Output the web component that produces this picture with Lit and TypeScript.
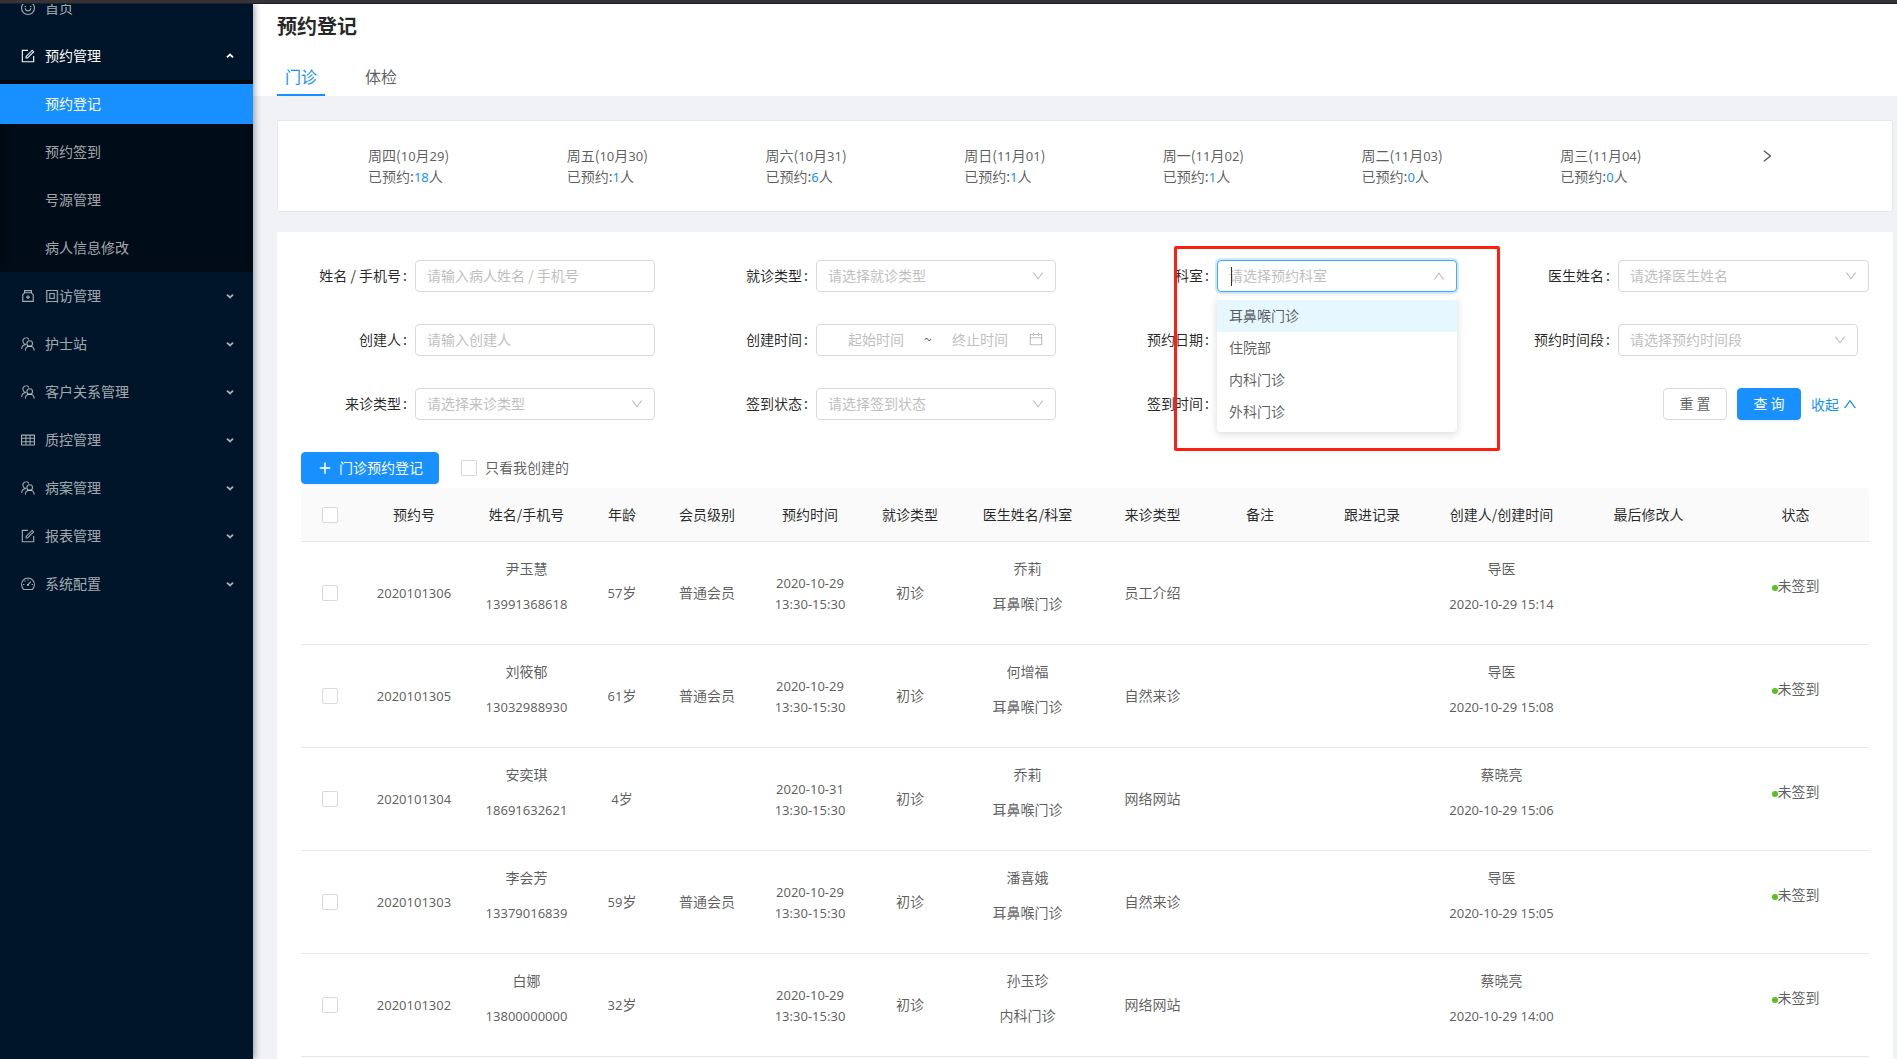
import { LitElement, html, css, svg } from "lit";
import { customElement, state } from "lit/decorators.js";

const icons: Record<string, unknown> = {
  smile: svg`<g fill="none" stroke="currentColor" stroke-width="70"><circle cx="512" cy="512" r="413"/><path d="M336 545c12 95 88 152 176 152s164-57 176-152" stroke-linecap="round"/></g><circle cx="336" cy="416" r="50"/><circle cx="688" cy="416" r="50"/>`,
  form: svg`<path d="M904 512h-56c-4.4 0-8 3.6-8 8v320H184V184h320c4.4 0 8-3.6 8-8v-56c0-4.4-3.6-8-8-8H144c-17.7 0-32 14.3-32 32v736c0 17.7 14.3 32 32 32h736c17.7 0 32-14.3 32-32V520c0-4.4-3.6-8-8-8z"/><path d="M355.9 534.9L354 653.8c-.1 8.9 7.1 16.2 16 16.2h.4l118-2.9c2-.1 4-.9 5.4-2.3l415.9-415c3.1-3.1 3.1-8.2 0-11.3L785.4 114.3c-1.6-1.6-3.6-2.3-5.7-2.3s-4.1.8-5.7 2.3l-415.8 415a8.3 8.3 0 0 0-2.3 5.6zm63.5 23.6L779.7 199l45.2 45.1-360.5 359.7-45.7 1.1.7-46.4z"/>`,
  medicine: svg`<g fill="none" stroke="currentColor" stroke-width="72"><path d="M310 300L176 430v426h672V430L714 300z"/><path d="M290 300V164h444v136"/></g><path d="M476 460h72v88h88v72h-88v88h-72v-88h-88v-72h88z"/>`,
  team: svg`<g fill="none" stroke="currentColor" stroke-width="68" stroke-linecap="round"><circle cx="620" cy="480" r="180"/><path d="M340 910c20-140 120-250 280-250s270 110 290 250"/><path d="M560 200c-40-60-110-92-180-84-150 10-230 160-180 290 30 80 100 120 180 126M110 800c10-130 100-240 250-262"/></g>`,
  table: svg`<path d="M928 160H96c-17.7 0-32 14.3-32 32v640c0 17.7 14.3 32 32 32h832c17.7 0 32-14.3 32-32V192c0-17.7-14.3-32-32-32zm-40 208H676V232h212v136zm0 224H676V432h212v160zM412 432h200v160H412V432zm200-64H412V232h200v136zm-476 64h212v160H136V432zm0-200h212v136H136V232zm0 424h212v136H136V656zm276 0h200v136H412V656zm476 136H676V656h212v136z"/>`,
  dashboard: svg`<g fill="none" stroke="currentColor" stroke-width="68"><path d="M250 868a414 414 0 1 1 524 0z"/><path d="M512 200v90M290 290l60 60M190 540h90M744 540h90M500 580l190-220"/></g><circle cx="500" cy="580" r="66"/>`,
  down: svg`<path d="M884 256h-75c-5.1 0-9.9 2.5-12.9 6.6L512 654.2 227.9 262.6c-3-4.1-7.8-6.6-12.9-6.6h-75c-6.5 0-10.3 7.4-6.5 12.7l352.6 486.1c12.8 17.6 39 17.6 51.7 0l352.6-486.1c3.9-5.3.1-12.7-6.4-12.7z"/>`,
  up: svg`<path d="M890.5 755.3L537.9 269.2c-12.8-17.6-39-17.6-51.7 0L133.5 755.3A8 8 0 0 0 140 768h75c5.1 0 9.9-2.5 12.9-6.6L512 369.8l284.1 391.6c3 4.1 7.8 6.6 12.9 6.6h75c6.5 0 10.3-7.4 6.5-12.7z"/>`,
  right: svg`<path d="M765.7 486.8L314.9 134.7A7.97 7.97 0 0 0 302 141v77.3c0 4.9 2.3 9.6 6.1 12.6l360 281.1-360 281.1c-3.9 3-6.1 7.7-6.1 12.6V883c0 6.7 7.7 10.4 12.9 6.3l450.8-352.1a31.96 31.96 0 0 0 0-50.4z"/>`,
  plus: svg`<path d="M462 152h100v720H462z"/><path d="M176 462h672v100H176z"/>`,
  calendar: svg`<path d="M880 184H712v-64c0-4.4-3.6-8-8-8h-56c-4.4 0-8 3.6-8 8v64H384v-64c0-4.4-3.6-8-8-8h-56c-4.4 0-8 3.6-8 8v64H144c-17.7 0-32 14.3-32 32v664c0 17.7 14.3 32 32 32h736c17.7 0 32-14.3 32-32V216c0-17.7-14.3-32-32-32zm-40 656H184V460h656v380zM184 392V256h128v48c0 4.4 3.6 8 8 8h56c4.4 0 8-3.6 8-8v-48h256v48c0 4.4 3.6 8 8 8h56c4.4 0 8-3.6 8-8v-48h128v136H184z"/>`,
  caretDown: svg`<path d="M200 370l312 290 312-290" fill="none" stroke="currentColor" stroke-width="190"/>`,
  caretUp: svg`<path d="M200 660l312-290 312 290" fill="none" stroke="currentColor" stroke-width="190"/>`,
};

const icon = (name: string, cls = "") =>
  html`<svg class="icon ${cls}" viewBox="0 0 1024 1024" aria-hidden="true">${icons[name]}</svg>`;

/** Sets runs of digits in the numeral face, leaving Han text as it is. */
const numerals = (text: string) =>
  text
    .split(/([0-9][0-9:\- ]*)/)
    .filter(Boolean)
    .map((part) => (/^[0-9]/.test(part) ? html`<span class="num">${part}</span>` : part));

const menu = [
  { icon: "smile", label: "首页" },
  {
    icon: "form",
    label: "预约管理",
    children: ["预约登记", "预约签到", "号源管理", "病人信息修改"],
  },
  { icon: "medicine", label: "回访管理", closed: true },
  { icon: "team", label: "护士站", closed: true },
  { icon: "team", label: "客户关系管理", closed: true },
  { icon: "table", label: "质控管理", closed: true },
  { icon: "team", label: "病案管理", closed: true },
  { icon: "form", label: "报表管理", closed: true },
  { icon: "dashboard", label: "系统配置", closed: true },
];

const days = [
  ["周四(10月29)", "18"],
  ["周五(10月30)", "1"],
  ["周六(10月31)", "6"],
  ["周日(11月01)", "1"],
  ["周一(11月02)", "1"],
  ["周二(11月03)", "0"],
  ["周三(11月04)", "0"],
];

const columns: [string, number][] = [
  ["预约号", 110],
  ["姓名/手机号", 115],
  ["年龄", 76],
  ["会员级别", 94],
  ["预约时间", 112],
  ["就诊类型", 88],
  ["医生姓名/科室", 147],
  ["来诊类型", 103],
  ["备注", 112],
  ["跟进记录", 112],
  ["创建人/创建时间", 147],
  ["最后修改人", 147],
  ["状态", 147],
];

const rows = [
  { id: "2020101306", name: "尹玉慧", phone: "13991368618", age: "57岁", level: "普通会员", date: "2020-10-29", doctor: "乔莉", dept: "耳鼻喉门诊", source: "员工介绍", by: "导医", at: "2020-10-29 15:14" },
  { id: "2020101305", name: "刘筱郁", phone: "13032988930", age: "61岁", level: "普通会员", date: "2020-10-29", doctor: "何增福", dept: "耳鼻喉门诊", source: "自然来诊", by: "导医", at: "2020-10-29 15:08" },
  { id: "2020101304", name: "安奕琪", phone: "18691632621", age: "4岁", level: "", date: "2020-10-31", doctor: "乔莉", dept: "耳鼻喉门诊", source: "网络网站", by: "蔡晓亮", at: "2020-10-29 15:06" },
  { id: "2020101303", name: "李会芳", phone: "13379016839", age: "59岁", level: "普通会员", date: "2020-10-29", doctor: "潘喜娥", dept: "耳鼻喉门诊", source: "自然来诊", by: "导医", at: "2020-10-29 15:05" },
  { id: "2020101302", name: "白娜", phone: "13800000000", age: "32岁", level: "", date: "2020-10-29", doctor: "孙玉珍", dept: "内科门诊", source: "网络网站", by: "蔡晓亮", at: "2020-10-29 14:00" },
];

@customElement("app-root")
export class AppRoot extends LitElement {
  @state() private department = "耳鼻喉门诊";

  static styles = css`
    :host {
      display: flex;
      flex-direction: column;
      height: 100vh;
      overflow: hidden;
      background: #f0f2f5;
      color: rgba(0, 0, 0, 0.65);
      font: 14px/21px "Noto Sans CJK SC", sans-serif;
    }
    * { box-sizing: border-box; }
    button, input, select { font: inherit; color: inherit; margin: 0; }
    a { color: inherit; text-decoration: none; }
    h1, p, ul { margin: 0; padding: 0; }
    ul { list-style: none; }
    .icon { display: block; flex: none; width: 16px; height: 16px; fill: currentColor; }
    .num { font-family: "Noto Sans", sans-serif; font-size: 13px; line-height: 1; }
    .topbar { flex: none; height: 4px; background: #343438; border-bottom: 1px solid #202124; }
    .shell { flex: 1; min-height: 0; display: flex; overflow: hidden; }

    .side {
      flex: none; width: 253px; overflow: hidden; background: #001529;
      color: rgba(255, 255, 255, 0.65); box-shadow: 2px 0 6px rgba(0, 21, 41, 0.35); z-index: 1;
    }
    .menu { margin-top: -20px; }
    .entry {
      display: flex; align-items: center; gap: 9px; width: 100%; height: 48px;
      padding: 0 16px 0 20px; border: 0; background: none; text-align: left;
    }
    .entry.open { color: #fff; }
    .entry .icon.caret { width: 10px; height: 10px; margin: 0 2px 0 auto; }
    .sub { background: #000c17; box-shadow: inset 0 2px 8px rgba(0, 0, 0, 0.45); }
    .sub li { padding: 4px 0; }
    .sub a { display: block; padding: 0 0 2px 45px; line-height: 38px; }
    .sub a.current { background: #1890ff; color: #fff; }
    .entry span, .btn span, .check span { padding-bottom: 2px; }

    .main { flex: 1; min-width: 0; overflow: hidden; }
    .head { height: 92px; padding: 7px 24px 0; background: #fff; }
    h1 { font-size: 20px; line-height: 30px; font-weight: 700; color: rgba(0, 0, 0, 0.85); }
    .tabs { display: flex; gap: 32px; margin-top: 17px; font-size: 16px; }
    .tabs a { padding: 6px 8px 8px; line-height: 24px; }
    .tabs a.current { color: #1890ff; border-bottom: 2px solid #1890ff; padding-bottom: 6px; }
    .content { display: flex; flex-direction: column; gap: 20px; padding: 24px 4px 0 24px; }

    .days {
      display: grid; grid-template-columns: repeat(7, 1fr) 133px; padding: 24px 0 24px 90px;
      background: #fff; border: 1px solid #e8e8e8; border-radius: 2px;
    }
    .days b { font-weight: 400; color: #1890ff; }
    .next { justify-self: start; align-self: start; height: 21px; padding: 0; border: 0; background: none; }

    .panel { padding: 28px 24px 0; background: #fff; min-height: 100vh; }
    .filters { display: grid; grid-template-columns: repeat(4, 1fr); row-gap: 32px; margin: 0 -18px; }
    .field { display: flex; align-items: center; padding: 0 18px; height: 32px; }
    .label { flex: none; width: 114px; padding: 0 8px 2px 0; text-align: right; color: rgba(0, 0, 0, 0.85); white-space: nowrap; }
    .colon { margin-left: 2px; }
    .control { position: relative; flex: 1; max-width: 240px; height: 32px; }
    .control.wide { max-width: none; }
    .box {
      width: 100%; height: 32px; padding: 0 11px 2px; border: 1px solid #d9d9d9; border-radius: 4px;
      background: #fff; outline: 0; appearance: none; display: flex; align-items: center;
    }
    select.box { color: #bfbfbf; }
    ::placeholder { color: #bfbfbf; opacity: 1; }
    .control > .icon { position: absolute; right: 11px; top: 9px; width: 14px; height: 14px; color: #bfbfbf; pointer-events: none; }
    .range input { flex: 1; min-width: 0; width: 0; border: 0; outline: 0; padding: 0; text-align: center; background: none; }
    .range .icon { color: #bfbfbf; }
    .box.focus { border-color: #40a9ff; box-shadow: 0 0 0 2px rgba(24, 144, 255, 0.2); }
    .caret-line { position: absolute; left: 14px; top: 7px; width: 1px; height: 19px; background: #333; }
    .options {
      position: absolute; z-index: 2; top: 36px; left: 0; right: 0; padding: 4px 0;
      background: #fff; border-radius: 4px; box-shadow: 0 2px 8px rgba(0, 0, 0, 0.15);
    }
    .options li { padding: 0 12px 2px; line-height: 30px; }
    .options li.active { background: #e6f7ff; }
    .marker { position: absolute; z-index: 3; inset: -14px -43px auto; height: 205px; border: 3px solid #ff1e10; border-radius: 2px; pointer-events: none; }

    .actions { display: flex; align-items: center; justify-content: flex-end; gap: 10px; padding-right: 29px; }
    .btn {
      display: flex; align-items: center; justify-content: center; gap: 6px; height: 32px; padding: 0;
      border: 1px solid #d9d9d9; border-radius: 4px; background: #fff; white-space: pre;
    }
    .btn.primary { background: #1890ff; border-color: #1890ff; color: #fff; box-shadow: 0 2px 0 rgba(0, 0, 0, 0.045); }
    .actions .btn { width: 64px; }
    .fold { display: flex; align-items: center; gap: 3px; color: #1890ff; }

    .tools { display: flex; align-items: center; gap: 22px; margin: 32px 0 4px; }
    .tools .btn { width: 138px; }
    .check { display: flex; align-items: center; gap: 8px; }
    input[type="checkbox"] { appearance: none; display: block; width: 16px; height: 16px; border: 1px solid #d9d9d9; border-radius: 2px; background: #fff; }
    input[type="checkbox"]:checked { background: #1890ff; border-color: #1890ff; }

    table { width: 100%; table-layout: fixed; border-collapse: separate; border-spacing: 0; text-align: center; }
    th { padding: 16px 0; font-weight: 400; color: rgba(0, 0, 0, 0.85); background: #fafafa; border-bottom: 1px solid #e8e8e8; white-space: nowrap; }
    th:first-child { border-radius: 4px 0 0 0; }
    th:last-child { border-radius: 0 4px 0 0; }
    td { padding: 16px 0; border-bottom: 1px solid #e8e8e8; }
    td.one { padding-bottom: 18px; }
    td p { margin-bottom: 14px; }
    table input[type="checkbox"] { margin: 0 auto; }
    .pick { width: 58px; }
    .dot { display: inline-block; width: 6px; height: 6px; border-radius: 3px; background: #52c41a; }
  `;

  private field(label: string, id: string, control: unknown, wide = false) {
    return html`<div class="field">
      <label class="label" for=${id}>${label}<span class="colon">:</span></label>
      <div class="control ${wide ? "wide" : ""}">${control}</div>
    </div>`;
  }

  private input(label: string, id: string, hint = "") {
    return this.field(label, id, html`<input class="box" id=${id} placeholder=${hint} />`);
  }

  private select(label: string, id: string, hint: string, wide = false) {
    return this.field(
      label,
      id,
      html`<select class="box" id=${id}><option>${hint}</option></select>${icon("down")}`,
      wide,
    );
  }

  render() {
    return html`
      <div class="topbar"></div>
      <div class="shell">
        <nav class="side">
          <ul class="menu">
            ${menu.map(
              (m) => html`<li>
                <button class="entry ${m.children ? "open" : ""}">
                  ${icon(m.icon)}<span>${m.label}</span>
                  ${m.children ? icon("caretUp", "caret") : m.closed ? icon("caretDown", "caret") : ""}
                </button>
                ${m.children
                  ? html`<ul class="sub">
                      ${m.children.map((c, i) => html`<li><a href="#" class=${i ? "" : "current"}>${c}</a></li>`)}
                    </ul>`
                  : ""}
              </li>`,
            )}
          </ul>
        </nav>
        <main class="main">
          <header class="head">
            <h1>预约登记</h1>
            <nav class="tabs"><a href="#" class="current">门诊</a><a href="#">体检</a></nav>
          </header>
          <div class="content">
            <section class="days">
              ${days.map(
                ([day, count]) => html`<div>
                  <div>${numerals(day)}</div>
                  <div>已预约:<b class="num">${count}</b>人</div>
                </div>`,
              )}
              <button class="next" aria-label="›">${icon("right")}</button>
            </section>
            <section class="panel">
              <form class="filters">
                ${this.input("姓名 / 手机号", "patient", "请输入病人姓名 / 手机号")}
                ${this.select("就诊类型", "visit", "请选择就诊类型")}
                ${this.field(
                  "科室",
                  "department",
                  html`<input class="box focus" id="department" role="combobox" aria-expanded="true" aria-controls="departments" placeholder="请选择预约科室" />
                    <span class="caret-line"></span>
                    ${icon("up")}
                    <ul class="options" id="departments" role="listbox">
                      ${["耳鼻喉门诊", "住院部", "内科门诊", "外科门诊"].map(
                        (d) => html`<li role="option" class=${d === this.department ? "active" : ""}
                          @mouseenter=${() => (this.department = d)}>${d}</li>`,
                      )}
                    </ul>
                    <span class="marker"></span>`,
                )}
                ${this.select("医生姓名", "doctor", "请选择医生姓名", true)}
                ${this.input("创建人", "creator", "请输入创建人")}
                ${this.field(
                  "创建时间",
                  "created",
                  html`<div class="box range">
                    <input id="created" placeholder="起始时间" />~<input aria-label="终止时间" placeholder="终止时间" />${icon("calendar")}
                  </div>`,
                )}
                ${this.input("预约日期", "date")}
                ${this.select("预约时间段", "slot", "请选择预约时间段")}
                ${this.select("来诊类型", "source", "请选择来诊类型")}
                ${this.select("签到状态", "status", "请选择签到状态")}
                ${this.input("签到时间", "checkin")}
                <div class="actions">
                  <button type="button" class="btn"><span>重 置</span></button>
                  <button type="button" class="btn primary"><span>查 询</span></button>
                  <a class="fold" href="#">收起${icon("up")}</a>
                </div>
              </form>
              <div class="tools">
                <button class="btn primary">${icon("plus")}<span>门诊预约登记</span></button>
                <label class="check"><input type="checkbox" /><span>只看我创建的</span></label>
              </div>
              <table>
                <thead>
                  <tr>
                    <th class="pick"><input type="checkbox" aria-label="全选" /></th>
                    ${columns.map(([name, width]) => html`<th style="width:${width}px">${name}</th>`)}
                  </tr>
                </thead>
                <tbody>
                  ${rows.map(
                    (r) => html`<tr>
                      <td><input type="checkbox" aria-label=${r.id} /></td>
                      <td class="one">${numerals(r.id)}</td>
                      <td><p>${r.name}</p><p>${numerals(r.phone)}</p></td>
                      <td class="one">${numerals(r.age)}</td>
                      <td class="one">${r.level}</td>
                      <td>${numerals(r.date)}<br />${numerals("13:30-15:30")}</td>
                      <td class="one">初诊</td>
                      <td><p>${r.doctor}</p><p>${r.dept}</p></td>
                      <td class="one">${r.source}</td>
                      <td></td>
                      <td></td>
                      <td><p>${r.by}</p><p>${numerals(r.at)}</p></td>
                      <td></td>
                      <td class="one"><p><span class="dot"></span>未签到</p></td>
                    </tr>`,
                  )}
                </tbody>
              </table>
            </section>
          </div>
        </main>
      </div>
    `;
  }
}
